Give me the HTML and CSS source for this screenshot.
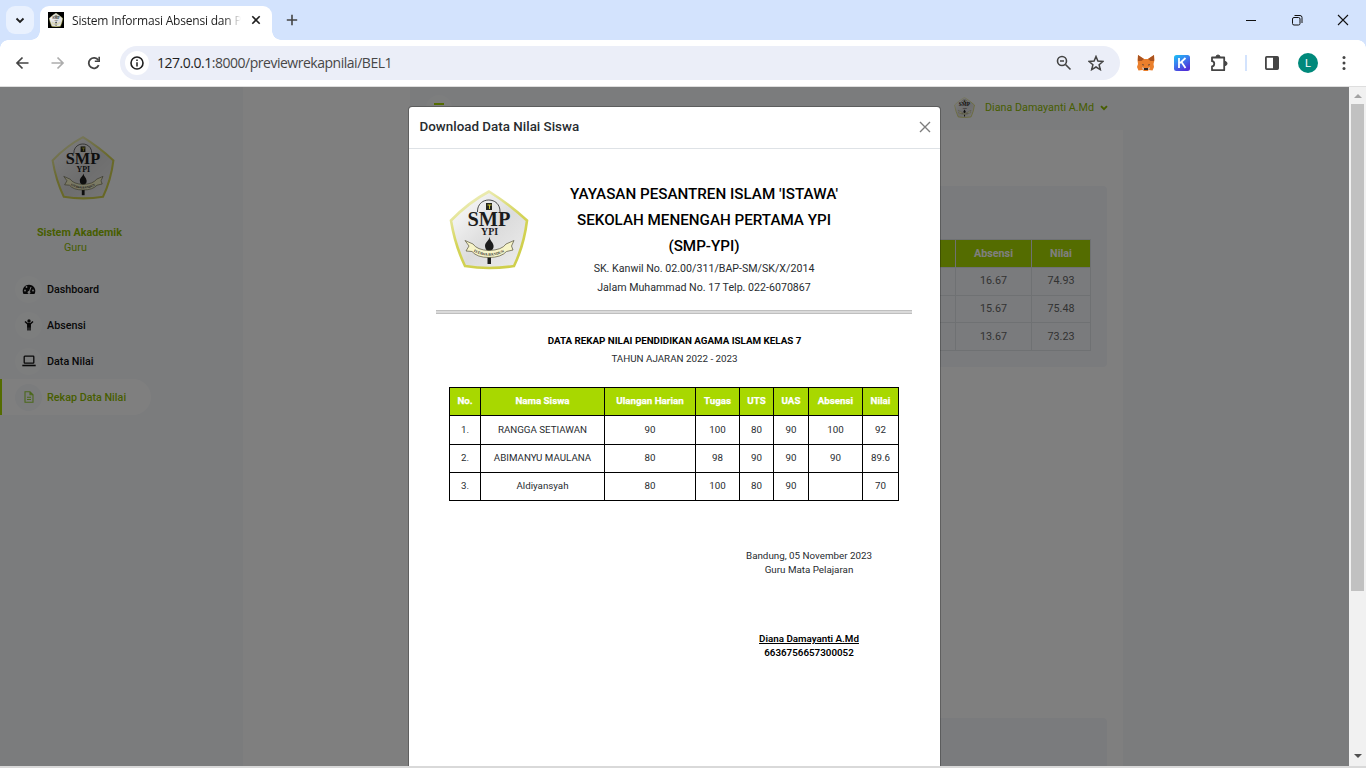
FILE: index.html
```html
<!DOCTYPE html>
<html lang="id">
<head>
<meta charset="utf-8">
<title>Sistem Informasi Absensi dan Rekap Nilai</title>
<link rel="stylesheet" href="styles.css">
</head>
<body>
<svg class="defs" width="0" height="0" aria-hidden="true">
  <defs>
    <linearGradient id="shield" x1="0" y1="0" x2="1" y2="1"><stop offset="0" stop-color="#ffffff"/><stop offset=".55" stop-color="#dcdcdc"/><stop offset="1" stop-color="#eeeeee"/></linearGradient>
    <linearGradient id="rim" x1="0" y1="0" x2=".5" y2="1"><stop offset="0" stop-color="#f5f5d8"/><stop offset=".6" stop-color="#d4d458"/><stop offset="1" stop-color="#cfcf4c"/></linearGradient>
    <symbol id="logo" viewBox="0 0 80 80">
      <path d="M40 1.500Q60 14 78 30.500Q75 55 65 76Q40 80 16 76Q6 55 2 30.500Q20 12 40 1.500Z" fill="url(#shield)" stroke="url(#rim)" stroke-width="2.600"/>
      <path d="M28.500 22C28 6 51.500 6 51 22" fill="none" stroke="#222" stroke-width=".8"/>
      <path d="M37 13h6v7h-6z" fill="#26261c"/><path d="M38.500 15h4M40.500 15v4" stroke="#cfc63a" fill="none"/>
      <text x="40" y="35.500" text-anchor="middle" class="logo-big" textLength="43" lengthAdjust="spacingAndGlyphs">SMP</text>
      <text x="40.500" y="45" text-anchor="middle" class="logo-mid" textLength="17" lengthAdjust="spacingAndGlyphs">YPI</text>
      <path d="M38.500 58h3.500v16h-3.500z" fill="#1c1c1c"/>
      <path d="M40.500 47C40 51 36 52 36 56C36 59 38 61 40 61C43 61 45 58.500 44.500 55.500C44 52 41 51 40.500 47Z" fill="#1c1c1c"/>
      <path d="M16 50.500L24 54Q28 60 40 60.500Q53 60 57 54L65 50.500L62.500 56L64 60L57.500 61.500Q52 67.500 40 67.500Q28 67.500 23 61.500L17 61L20 56Z" fill="#f7f4c8" stroke="#55523a" stroke-width=".7"/>
      <path id="ribbon" d="M24.500 61.500Q40 70 56.500 61.500" fill="none"/>
      <text class="logo-tiny"><textPath href="#ribbon">ISTAWA BANDUNG</textPath></text>
    </symbol>
  </defs>
</svg>

<header class="tabs">
  <div class="tab-search"><svg width="28" height="28" viewBox="0 0 28 28"><path d="M10.500 12.500l3.500 3.500 3.500-3.500" fill="none" stroke="#1f1f1f" stroke-width="1.800"/></svg></div>
  <div class="tab">
    <span class="favicon"><svg width="14" height="14"><use href="#logo"/></svg></span>
    <span class="tab-title">Sistem Informasi Absensi dan P</span>
    <svg class="tab-close" width="10" height="10" viewBox="0 0 10 10"><path d="M1.300 1.300l7.400 7.400M8.700 1.300L1.300 8.700" stroke="#1f1f1f" stroke-width="1.600"/></svg>
  </div>
  <svg class="new-tab" width="12" height="12" viewBox="0 0 12 12"><path d="M6 .8v10.400M.8 6h10.400" stroke="#444" stroke-width="1.600"/></svg>
  <div class="window-buttons">
    <svg width="12" height="12" viewBox="0 0 12 12"><path d="M1 6.500h10" stroke="#111"/></svg>
    <svg width="12" height="12" viewBox="0 0 12 12"><rect x="1.500" y="3.500" width="7.500" height="7.500" rx="1.500" fill="none" stroke="#111"/><path d="M3.500 1.500h5.500q2 0 2 2v5.500" fill="none" stroke="#111"/></svg>
    <svg width="12" height="12" viewBox="0 0 12 12"><path d="M1 1l10 10M11 1L1 11" stroke="#111" stroke-width="1.100"/></svg>
  </div>
</header>

<div class="toolbar">
  <svg width="14" height="14" viewBox="0 0 14 14"><path d="M13.500 7H2M7.500 1.500L2 7l5.500 5.500" fill="none" stroke="#444" stroke-width="1.700"/></svg>
  <svg width="14" height="14" viewBox="0 0 14 14"><path d="M.5 7H12M6.500 1.500L12 7l-5.500 5.500" fill="none" stroke="#adadad" stroke-width="1.700"/></svg>
  <svg width="14" height="14" viewBox="0 0 14 14"><path d="M11.700 9.200A5.200 5.200 0 1 1 11.300 4.200" fill="none" stroke="#444" stroke-width="1.800"/><path d="M13 .8v5.200H7.800V4.400h3.600V.8z" fill="#444"/></svg>
  <div class="address">
    <span class="info"><svg width="14" height="14" viewBox="0 0 14 14"><circle cx="7" cy="7" r="6" fill="none" stroke="#1f1f1f" stroke-width="1.600"/><path d="M7 6.200v4.200M7 3.500v1.500" stroke="#1f1f1f" stroke-width="1.500"/></svg></span>
    <span class="url"><b>127.0.0.1</b>:8000/previewrekapnilai/BEL1</span>
    <svg class="magnify" width="16" height="16" viewBox="0 0 16 16"><circle cx="6" cy="6" r="4.500" fill="none" stroke="#444" stroke-width="1.600"/><path d="M9.500 9.500l5 5M4 6h4" stroke="#444" stroke-width="1.600"/></svg>
    <svg width="16" height="16" viewBox="0 0 16 16"><path d="M8 1.500l1.900 4.600 5 .4-3.800 3.200 1.200 4.900L8 12l-4.300 2.600 1.200-4.900L1.100 6.500l5-.4z" fill="none" stroke="#444" stroke-width="1.500"/></svg>
  </div>
  <div class="extensions">
    <svg width="18" height="16" viewBox="0 0 18 16"><path d="M1 0l6 4h4l6-4 .5 5-1 4 .5 3-1.500 3.500-4-.5L11 16H7l-1.500-1-4 .5L0 12l1-3L.5 5z" fill="#ea7f2c"/><path d="M1 0l6 4-2.500 2L1 6zM17 0l-6 4 2.500 2L17 6z" fill="#a9531f"/><path d="M6 9l1.200 1.500L5 10zM12 9l-1.200 1.500L13 10z" fill="#28323c"/><path d="M7 13h4l.5 2h-5z" fill="#2b2423"/><path d="M5 12l2 1v2l-1.500-.5zM13 12l-2 1v2l1.500-.5z" fill="#d8bda8"/></svg>
    <svg width="16" height="16" viewBox="0 0 16 16"><defs><linearGradient id="kb" x1="0" y1="0" x2=".6" y2="1"><stop stop-color="#18c3f5"/><stop offset=".5" stop-color="#3c7cee"/><stop offset="1" stop-color="#5032d8"/></linearGradient></defs><rect width="16" height="16" rx="2.500" fill="url(#kb)"/><path d="M5 3v10M11.500 3L6 8.200M7.500 7l4 6" stroke="#fff" stroke-width="1.800" fill="none"/></svg>
    <svg class="puzzle" width="18" height="18" viewBox="0 0 18 18"><path d="M2 3.500h12.200v12.700H2v-3.700c3-.5 3-5 0-5.300z" fill="none" stroke="#444" stroke-width="1.800" stroke-linejoin="round"/><path d="M6 3a2 2 0 0 1 4 0zM15 7.500a2 2 0 0 1 0 4z" fill="#444" stroke="#444"/></svg>
    <i class="divider"></i>
    <svg width="16" height="16" viewBox="0 0 16 16"><rect x="1.900" y="1.900" width="12.200" height="12.200" rx=".8" fill="none" stroke="#444" stroke-width="1.800"/><path d="M9 2h5v12H9z" fill="#444"/></svg>
    <span class="profile">L</span>
    <svg class="dots" width="4" height="16" viewBox="0 0 4 16"><g fill="#444"><circle cx="2" cy="2.500" r="1.500"/><circle cx="2" cy="8" r="1.500"/><circle cx="2" cy="13.500" r="1.500"/></g></svg>
  </div>
</div>

<div class="viewport">
  <div class="page">
    <aside class="sidebar">
      <svg class="side-logo" width="64" height="64"><use href="#logo"/></svg>
      <div class="side-title">Sistem Akademik</div>
      <div class="side-role">Guru</div>
      <nav>
        <a class="item"><span class="bubble"><svg width="14" height="12" viewBox="0 0 14 12"><path d="M1.500 11A6.300 6.300 0 1 1 12.500 11z" fill="#111"/><path d="M7 9.500L9 4" stroke="#eee" stroke-width="1"/><g fill="#eee"><circle cx="3" cy="7.500" r=".9"/><circle cx="4.500" cy="4" r=".9"/><circle cx="11" cy="7.500" r=".9"/><circle cx="7" cy="9.500" r="1.400"/></g></svg></span>Dashboard</a>
        <a class="item"><span class="bubble"><svg width="10" height="12" viewBox="0 0 10 12"><circle cx="5" cy="2" r="1.700" fill="#111"/><path d="M1 2.500l2.500 2.300h3L9 2.500M4 5v6.500M6 5v6.500" fill="none" stroke="#111" stroke-width="1.500"/><path d="M3.200 4.500h3.600v4H3.200z" fill="#111"/></svg></span>Absensi</a>
        <a class="item"><span class="bubble"><svg width="14" height="12" viewBox="0 0 14 12"><rect x="2.200" y="1.200" width="9.600" height="7" rx=".6" fill="none" stroke="#111" stroke-width="1.300"/><path d="M.3 10.500h13.400" stroke="#111" stroke-width="1.600"/></svg></span>Data Nilai</a>
        <a class="item active"><span class="bubble"><svg width="10" height="12" viewBox="0 0 10 12"><path d="M1 .8h5l3 3v7.400H1zM6 .8v3h3M3 6.300h4M3 8.500h4" fill="none" stroke="#97cf35" stroke-width="1.100"/></svg></span>Rekap Data Nilai</a>
      </nav>
    </aside>
    <main class="main">
      <div class="topbar">
        <span class="burger"><i></i><i></i><i></i></span>
        <span class="user"><svg width="21" height="21"><use href="#logo"/></svg>Diana Damayanti A.Md<svg class="chev" width="8" height="6" viewBox="0 0 8 6"><path d="M1 1.200l3 3 3-3" fill="none" stroke="#8fbc00" stroke-width="1.900"/></svg></span>
      </div>
      <div class="content">
        <section class="card">
          <table class="scores">
            <tr><th>UAS</th><th>Absensi</th><th>Nilai</th></tr>
            <tr><td></td><td>16.67</td><td>74.93</td></tr>
            <tr><td></td><td>15.67</td><td>75.48</td></tr>
            <tr><td></td><td>13.67</td><td>73.23</td></tr>
          </table>
        </section>
        <section class="card footer-card"></section>
      </div>
    </main>
  </div>
  <div class="backdrop">
    <div class="modal">
      <div class="modal-head"><h1>Download Data Nilai Siswa</h1><svg width="12" height="12" viewBox="0 0 12 12"><path d="M1 1l10 10M11 1L1 11" stroke="#7d7d7d" stroke-width="1.400"/></svg></div>
      <div class="letterhead">
        <svg width="80" height="80"><use href="#logo"/></svg>
        <div class="school">
          <h2>YAYASAN PESANTREN ISLAM 'ISTAWA'</h2>
          <h2>SEKOLAH MENENGAH PERTAMA YPI</h2>
          <h2>(SMP-YPI)</h2>
          <p>SK. Kanwil No. 02.00/311/BAP-SM/SK/X/2014</p>
          <p>Jalam Muhammad No. 17 Telp. 022-6070867</p>
        </div>
      </div>
      <hr class="rule">
      <h3>DATA REKAP NILAI PENDIDIKAN AGAMA ISLAM KELAS 7</h3>
      <p class="year">TAHUN AJARAN 2022 - 2023</p>
      <table class="report">
        <colgroup><col class="c1"><col class="c2"><col class="c3"><col class="c4"><col class="c5"><col class="c6"><col class="c7"><col class="c8"></colgroup>
        <tr><th>No.</th><th>Nama Siswa</th><th>Ulangan Harian</th><th>Tugas</th><th>UTS</th><th>UAS</th><th>Absensi</th><th>Nilai</th></tr>
        <tr class="first"><td>1.</td><td>RANGGA SETIAWAN</td><td>90</td><td>100</td><td>80</td><td>90</td><td>100</td><td>92</td></tr>
        <tr><td>2.</td><td>ABIMANYU MAULANA</td><td>80</td><td>98</td><td>90</td><td>90</td><td>90</td><td>89.6</td></tr>
        <tr><td>3.</td><td>Aldiyansyah</td><td>80</td><td>100</td><td>80</td><td>90</td><td></td><td>70</td></tr>
      </table>
      <div class="sign">
        <p>Bandung, 05 November 2023</p>
        <p>Guru Mata Pelajaran</p>
        <p class="name"><u>Diana Damayanti A.Md</u></p>
        <p class="id">6636756657300052</p>
      </div>
    </div>
  </div>
  <div class="scrollbar"><i class="up"></i><i class="thumb"></i><i class="down"></i></div>
</div>
</body>
</html>
```
FILE: styles.css
```css
* { box-sizing: border-box; }
body { margin: 0; width: 1366px; height: 768px; overflow: hidden; display: flex; flex-direction: column; background: #d9d9d9; font-family: Roboto, sans-serif; color: #212529; }
h1, h2, h3, p { margin: 0; }
svg { display: block; flex: none; }
.defs { position: absolute; }
.logo-big { font: bold 21px "Liberation Serif", serif; fill: #1c1c1c; }
.logo-mid { font: bold 11px "Liberation Serif", serif; fill: #1c1c1c; }
.logo-tiny { font: bold 3.9px "Liberation Serif", serif; fill: #333; }

/* Browser chrome */
.tabs { height: 40px; background: #d3e3fd; display: flex; flex: none; }
.tab-search { width: 28px; height: 28px; margin: 6px 6px 0; border-radius: 9px; background: #e9f1fe; }
.tab { width: 232px; height: 34px; margin-top: 6px; padding: 0 11px 6px 8px; background: #fff; border-radius: 9px 9px 0 0; display: flex; align-items: center; position: relative; }
.tab::before, .tab::after { content: ""; position: absolute; bottom: 0; width: 9px; height: 9px; }
.tab::before { left: -9px; background: radial-gradient(circle at 0 0, transparent 8.5px, #fff 9px); }
.tab::after { right: -9px; background: radial-gradient(circle at 100% 0, transparent 8.5px, #fff 9px); }
.favicon { width: 16px; height: 16px; background: #000; padding: 1px; margin-right: 8px; flex: none; }
.tab-title { width: 172px; white-space: nowrap; font: 12px "Open Sans", sans-serif; letter-spacing: -.2px; color: #1f1f1f; -webkit-mask-image: linear-gradient(90deg, #000 152px, transparent 169px); }
.tab-close { margin-left: auto; }
.new-tab { margin: 14px 0 0 14px; }
.window-buttons { margin: 14px 17px 0 auto; display: flex; gap: 34px; }
.toolbar { height: 46px; flex: none; background: #fff; display: flex; align-items: center; padding-left: 15px; gap: 22px; background: radial-gradient(circle at 0 100%, #fff 7.5px, #d3e3fd 8px) 0 0 / 8px 8px no-repeat, radial-gradient(circle at 0 100%, #fff 7.5px, #d3e3fd 8px) 100% 0 / 8px 8px no-repeat, #fff; }
.toolbar { background: radial-gradient(circle at 8px 8px, #fff 7.5px, #d3e3fd 8px) 0 0 / 8px 8px no-repeat, radial-gradient(circle at 0 8px, #fff 7.5px, #d3e3fd 8px) 100% 0 / 8px 8px no-repeat, #fff; }
.address { width: 1000px; height: 34px; margin-left: -3px; background: #ebeef8; border-radius: 17px; display: flex; align-items: center; padding: 0 16px 0 5px; }
.info { width: 24px; height: 24px; border-radius: 50%; background: #fff; display: grid; place-items: center; margin-right: 8px; }
.url { font: 14px "Open Sans", sans-serif; letter-spacing: -.48px; color: #474747; white-space: nowrap; padding-bottom: 2px; }
.url b { font-weight: 400; color: #1f1f1f; }
.magnify { margin: 0 16px 0 auto; }
.extensions { display: flex; align-items: center; margin-left: -5px; gap: 19px; }
.puzzle { margin: 0 -1px 0 1px; }
.divider { width: 2px; height: 16px; background: #d3e3fd; margin: 0 -2px 0 -1px; }
.profile { width: 20px; height: 20px; border-radius: 50%; background: #00897b; color: #fff; font-size: 11px; display: grid; place-items: center; margin-left: -1px; }
.dots { margin-left: 5px; }

/* Web page */
.viewport { height: 680px; flex: none; position: relative; display: flex; border-top: 1px solid #dedede; }
.page { width: 1349px; display: flex; background: #f6f8fb; overflow: hidden; }
.sidebar { width: 243px; flex: none; padding-top: 49px; }
.side-logo { margin-left: 51px; }
.side-title { margin-top: 25px; padding-left: 37px; font: bold 10.75px/15px Roboto, sans-serif; color: #8fbc00; }
.side-role { padding-left: 64px; font-size: 10.75px; line-height: 15px; color: #8fbc00; }
.sidebar nav { margin-top: 16px; }
.item { display: flex; align-items: center; height: 36px; padding-left: 15px; font-size: 10.75px; font-weight: 500; color: #111; }
.bubble { width: 27px; height: 27px; border-radius: 50%; background: #fbfcfd; display: grid; place-items: center; margin-right: 5px; }
.active { width: 151px; padding-left: 13px; border-left: 2px solid #a8d800; border-radius: 0 18px 18px 0; background: #fff; color: #8fbc00; }
.active .bubble { background: #f6f8fb; }
.main { width: 880px; flex: none; background: #fff; }
.topbar { height: 43px; margin-left: 167px; background: #f6f8fb; display: flex; align-items: flex-start; justify-content: space-between; padding: 8px 15px 0 16px; }
.burger { width: 26px; height: 26px; border-radius: 50%; background: #fbfcfd; display: flex; flex-direction: column; align-items: center; gap: 3px; padding-top: 8px; }
.burger i { width: 10px; height: 2px; background: #a8d800; }
.user { display: flex; align-items: center; gap: 10px; font-size: 10.75px; color: #8fbc00; margin-top: 2px; }
.user .chev { margin-left: -4px; }
.content { height: 637px; padding: 56px 16px 0 182px; display: flex; flex-direction: column; }
.card { height: 181px; flex: none; border-radius: 4px; background: #f4f6fa; padding: 53px 16px; display: flex; justify-content: flex-end; }
.footer-card { margin-top: 351px; }
.scores { width: 191px; height: 112px; table-layout: fixed; border-collapse: collapse; font-size: 10.75px; color: #666; text-align: center; }
.scores th, .scores td { border: 1px solid #dfe2e6; padding: 0 0 1px; height: 27.7px; }
.scores th { background: #a8d800; color: #fff; padding: 0; }
.scores th:nth-child(1) { width: 56px; }
.scores th:nth-child(2) { width: 76px; }
.scores th:nth-child(3) { width: 59px; }

/* Dialog */
.backdrop { position: absolute; left: 0; top: 0; width: 1349px; height: 679px; background: rgba(0,0,0,.5); padding: 19px 0 0 408px; overflow: hidden; }
.modal { width: 533px; height: 680px; border: 1px solid rgba(0,0,0,.25); border-radius: 4px; background: #fff; background-clip: padding-box; color: #282c30; }
.modal-head { height: 42px; border-bottom: 1px solid #dee2e6; display: flex; justify-content: space-between; align-items: center; padding: 0 9px 2px 10.5px; }
.modal-head h1 { font-size: 13.4px; font-weight: 500; line-height: 18px; }
.letterhead { display: flex; margin: 32px 0 0 40px; height: 129px; }
.letterhead > svg { margin-top: 9px; }
.school { width: 350px; text-align: center; }
.school h2 { font-size: 15.2px; line-height: 26px; font-weight: 500; color: #000; }
.school p { font-size: 10.65px; line-height: 19px; }
.rule { width: 476px; height: 4px; margin: 0 0 0 27px; border: solid #bfbfbf; border-width: 1px 0; background: #dadada; }
.modal h3 { margin-top: 18px; font-size: 9.8px; line-height: 18px; font-weight: 700; text-align: center; color: #000; }
.year { font-size: 9.8px; line-height: 18px; text-align: center; }
.report { width: 450px; margin: 19px 0 0 40px; table-layout: fixed; border-collapse: collapse; font-size: 9.75px; text-align: center; }
.report th, .report td { border: 1px solid #000; padding: 0 0 2px; height: 28px; }
.report .first td { height: 29px; }
.report th { background: #a8d800; color: #fff; -webkit-text-stroke: .25px #fff; }
.c1 { width: 31px; } .c2 { width: 124px; } .c3 { width: 91px; } .c4 { width: 44px; } .c5 { width: 34px; } .c6 { width: 35px; } .c7 { width: 54px; } .c8 { width: 36px; }
.sign { width: 200px; margin: 48px 0 0 300px; font-size: 9.8px; line-height: 13.5px; text-align: center; }
.sign .name { margin-top: 56px; font-weight: 600; color: #000; }
.sign .id { font-weight: 600; color: #000; }
.scrollbar { width: 17px; background: #f1f1f1; display: flex; flex-direction: column; align-items: center; padding: 7px 0 8px; }
.up, .down { border: solid transparent; border-width: 0 4px; }
.up { border-bottom: 4px solid #a3a3a3; }
.down { border-top: 4px solid #505050; margin-top: auto; }
.thumb { width: 13px; height: 487px; margin-top: 6px; background: #c1c1c1; }
```
